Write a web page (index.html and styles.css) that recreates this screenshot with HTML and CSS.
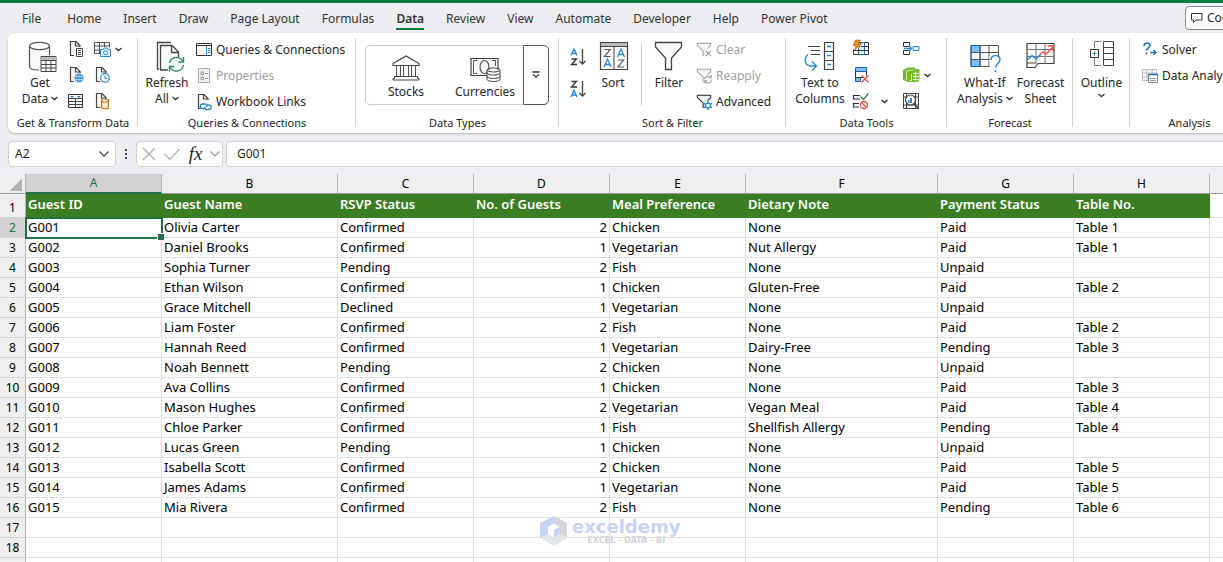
FILE: index.html
```html
<!DOCTYPE html>
<html lang="en">
<head>
  <meta charset="UTF-8" />
  <meta name="viewport" content="width=device-width, initial-scale=1" />
  <title>Guest List</title>
  <link rel="stylesheet" href="styles.css">
</head>
<body>

  <svg class="sprite" aria-hidden="true">
    <symbol id="chevron" viewBox="0 0 7 5"><path d="M.5 1l3 2.6 3-2.6" fill="none" stroke="#333" stroke-width="1.3"/></symbol>
    <symbol id="page" viewBox="0 0 16 18"><path d="M2.5 1.500h6.500l4 4v11h-10.500z" fill="#fafafa"/><path d="M6 15.500H2.500v-14h5.500l4 4v1.500M7.500 1.500v4.500h4.500" fill="none" stroke="#444" stroke-width="1.200"/></symbol>
    <symbol id="funnel" viewBox="0 0 18 18"><path d="M1.500 1.500h15v2.500l-5.500 6v6l-3-2v-4l-6.500-6z" fill="currentColor" fill-opacity=".08"/><path d="M8 16v-6l-6.500-6v-2.500h15v2.500l-3.500 3.500" fill="none" stroke="currentColor" stroke-width="1.200"/></symbol>
  </svg>

  <header class="top">
    <nav class="tabs">
      <a href="#" class="file">File</a>
      <a href="#">Home</a>
      <a href="#">Insert</a>
      <a href="#">Draw</a>
      <a href="#">Page Layout</a>
      <a href="#">Formulas</a>
      <a href="#" class="active">Data</a>
      <a href="#">Review</a>
      <a href="#">View</a>
      <a href="#">Automate</a>
      <a href="#">Developer</a>
      <a href="#">Help</a>
      <a href="#">Power Pivot</a>
    </nav>
    <button class="comments">
      <svg width="12" height="12" viewBox="0 0 12 12"><path d="M.500 1.500h10.500v6.500h-6l-2.500 2.500v-2.500h-2z" fill="none" stroke="#333"/></svg>
      Comments
    </button>
  </header>

  <main>
  <div class="ribbon">

    <section class="group get-data">
      <div class="tools">
        <button class="big">
          <svg width="32" height="32" viewBox="0 0 32 32"><path d="M5.500 5v21c0 2 4 3.500 10 3.500V18h10V5z" fill="#f8fafa"/><g fill="none" stroke="#555" stroke-width="1.200"><ellipse cx="15.500" cy="5" rx="10" ry="3.700" fill="#fff"/><path d="M5.500 5v20.500c0 2 4 3.500 9.500 3.500M25.500 5v9"/></g><path d="M17 15.500h15v15h-15z" fill="#fff" stroke="#444"/><path d="M17 16h15v3h-15z" fill="#bbb"/><path d="M17 19.500h15M17 23.500h15M17 27h15M22 19v11.500M27 19v11.500" stroke="#444" fill="none"/></svg>
          <span>Get</span>
          <span>Data <svg class="chev"><use href="#chevron"/></svg></span>
        </button>
        <div class="icon-grid">
          <button aria-label="From Text/CSV"><svg width="16" height="18" viewBox="0 0 16 18"><use href="#page"/><path d="M8.500 8.500h6v8h-6z" fill="#fff" stroke="#444"/><path d="M10 10.500h3M10 12.500h3M10 14.500h3" stroke="#444"/></svg></button>
          <button aria-label="From Picture"><svg width="17" height="18" viewBox="0 0 17 18"><path d="M.500 2.500h15v11h-15z" fill="#fafafa"/><path d="M6 13.500H.500v-11h15v5M.500 6h15M.500 10h6M5.500 2v11M10.500 2v5" fill="none" stroke="#555"/><path d="M6.500 9.500h2.500l1-1.500h3l1 1.500h2.500v7h-10z" fill="#e5f2fb" stroke="#2b88d0"/><circle cx="11.500" cy="12.700" r="2" fill="#fff" stroke="#2b88d0"/></svg></button>
          <svg class="chev"><use href="#chevron"/></svg>
          <button aria-label="From Web"><svg width="16" height="18" viewBox="0 0 16 18"><use href="#page"/><circle cx="11" cy="12" r="4.500" fill="#2583cc"/><path d="M6.500 10.500h9M6.500 13.500h9M11 7.500v9M9 8c-1 3-1 5 0 8M13 8c1 3 1 5 0 8" stroke="#b9dbf2" stroke-width=".8" fill="none"/></svg></button>
          <button aria-label="Recent Sources"><svg width="16" height="18" viewBox="0 0 16 18"><use href="#page"/><circle cx="11" cy="12" r="4.300" fill="#fff" stroke="#2b88d0" stroke-width="1.200"/><path d="M11 9.500v3h2.200" fill="none" stroke="#2b88d0"/></svg></button>
          <i></i>
          <button aria-label="From Table"><svg width="16" height="18" viewBox="0 0 16 18"><path d="M.500 2.500h14v13h-14z" fill="#fafafa" stroke="#333"/><path d="M.500 6.500h14M.500 9.500h14M.500 12.500h14M7.500 6.500v9" stroke="#444"/><path d="M2 4h4l-2 2zM9 4h4l-2 2z" fill="#2b88d0"/></svg></button>
          <button aria-label="Existing Connections"><svg width="16" height="18" viewBox="0 0 16 18"><use href="#page"/><path d="M7.500 8.500v7c0 .8 1.500 1.300 3.500 1.300s3.500-.5 3.500-1.300v-7" fill="#fbe9d3" stroke="#cf6f10" stroke-width="1.200"/><ellipse cx="11" cy="8.500" rx="3.500" ry="1.500" fill="#fff" stroke="#cf6f10" stroke-width="1.200"/></svg></button>
        </div>
      </div>
      <h2>Get &amp; Transform Data</h2>
    </section>

    <section class="group queries">
      <div class="tools">
        <button class="big">
          <svg width="32" height="32" viewBox="0 0 32 32"><path d="M9.500 4.500h11l7 7v18h-18z" fill="#f8fafa"/><path d="M8 28H6.500V1.500H20" fill="none" stroke="#444" stroke-width="1.300"/><path d="M17 29H9.500V4.500h11.500l6.500 6.500v5M20.500 4.500V11.500h7" fill="none" stroke="#444" stroke-width="1.300"/><path d="M18.500 22a7 7 0 0 1 13-2M32.500 16v5h-5M32.500 24a7 7 0 0 1-13 2.500M18.500 30.500v-5h5" fill="none" stroke="#2e8b57" stroke-width="1.400"/></svg>
          <span>Refresh</span>
          <span>All <svg class="chev"><use href="#chevron"/></svg></span>
        </button>
        <div class="list">
          <button><svg width="16" height="18" viewBox="0 0 16 18"><path d="M.500 2.500h15v12h-15z" fill="#fafafa" stroke="#333"/><path d="M.500 4.500h15" stroke="#333"/><path d="M10.500 5v9" stroke="#2b88d0"/><path d="M12 7.500h2.500M12 9.500h2.500M12 11.500h2.500" stroke="#2b88d0"/></svg>Queries &amp; Connections</button>
          <button disabled><svg width="16" height="18" viewBox="0 0 16 18"><path d="M2.500 1.500h11v14h-11z" fill="#f0f0f0" stroke="#aaa"/><path d="M5 5h2.500v2.500H5zM5 10h2.500v2.500H5zM9 6.500h3M9 11.500h3" fill="none" stroke="#999"/></svg>Properties</button>
          <button><svg width="16" height="18" viewBox="0 0 16 18"><use href="#page"/><path d="M4.500 11h10.500v6h-10.500z" fill="#fff"/><path d="M9 15.500H6.500a2 2 0 0 1 0-4.500h2.500a2 2 0 0 1 1.500 3M11 12h2a2 2 0 0 1 0 4.500h-2.500a2 2 0 0 1-1.500-3" fill="none" stroke="#2b88d0" stroke-width="1.300"/></svg>Workbook Links</button>
        </div>
      </div>
      <h2>Queries &amp; Connections</h2>
    </section>

    <section class="group types">
      <div class="tools">
        <div class="gallery">
          <button>
            <svg width="30" height="28" viewBox="0 0 30 28"><path d="M2 9.500L15 2l13 7.500v2H2z" fill="#fafafa" stroke="#444" stroke-width="1.200"/><path d="M5.500 11.500v11M9.500 11.500v11M12.500 11.500v11M17.500 11.500v11M20.500 11.500v11M24.500 11.500v11" stroke="#555"/><path d="M3.500 22.500h23v2h1.500v1.500H2v-1.500h1.500z" fill="#fff" stroke="#444"/></svg>
            Stocks
          </button>
          <button>
            <svg width="30" height="28" viewBox="0 0 30 28"><path d="M1 4.500h27v17H1z" fill="#f8fafa" stroke="#444" stroke-width="1.200"/><path d="M7 6.500H3.500V19.500H7M22 6.500h3.500V12" fill="none" stroke="#555"/><ellipse cx="14.500" cy="13" rx="4.500" ry="6.500" fill="none" stroke="#555" stroke-width="1.200"/><path d="M17 16v10c0 1 3 2 6.500 2s6.500-1 6.500-2V16z" fill="#fff"/><g fill="none" stroke="#444"><ellipse cx="23.500" cy="16" rx="6.500" ry="2"/><path d="M17 16v9.500c0 1 3 2 6.500 2s6.500-1 6.500-2V16M17 19c0 1 3 2 6.500 2s6.500-1 6.500-2M17 22.500c0 1 3 2 6.500 2s6.500-1 6.500-2"/></g></svg>
            Currencies
          </button>
          <button class="more" aria-label="More data types"><svg width="8" height="8" viewBox="0 0 8 8"><path d="M.500 1h7M1 3.500L4 6l3-2.500" fill="none" stroke="#333" stroke-width="1.300"/></svg></button>
        </div>
      </div>
      <h2>Data Types</h2>
    </section>

    <section class="group sort">
      <div class="tools">
        <div class="sort-dir">
          <button aria-label="Sort A to Z"><svg width="18" height="20" viewBox="0 0 18 20"><path d="M2 8.500L5 2l3 6.500M3 6.500h4" fill="none" stroke="#2b88d0" stroke-width="1.400"/><path d="M2.500 12h5l-5 5.500h5.500" fill="none" stroke="#333" stroke-width="1.300"/><path d="M13.500 2v15M10.500 14l3 3 3-3" fill="none" stroke="#444" stroke-width="1.300"/></svg></button>
          <button aria-label="Sort Z to A"><svg width="18" height="20" viewBox="0 0 18 20"><path d="M2.500 2.500h5l-5 5.500h5.500" fill="none" stroke="#333" stroke-width="1.300"/><path d="M2 18l3-6.500 3 6.500M3 16h4" fill="none" stroke="#2b88d0" stroke-width="1.400"/><path d="M13.500 2v15M10.500 14l3 3 3-3" fill="none" stroke="#444" stroke-width="1.300"/></svg></button>
        </div>
        <button class="big">
          <svg width="32" height="32" viewBox="0 0 32 32"><path d="M3.500 1.500h27v27h-27z" fill="#fafafa" stroke="#444" stroke-width="1.200"/><path d="M4 2h26v3H4z" fill="#bbb"/><path d="M3.500 5.500h27M17 5.500v23" stroke="#444"/><path d="M7.500 8.500h5.500l-5.500 7h6M21 19h5.500l-5.500 7h6" fill="none" stroke="#555" stroke-width="1.200"/><path d="M7 26l3.500-8 3.500 8M8.500 23.500h4M20.500 16l3.500-8 3.500 8M22 13.500h4" fill="none" stroke="#2b88d0" stroke-width="1.300"/></svg>
          <span>Sort</span>
        </button>
        <button class="big filter">
          <svg width="32" height="32" viewBox="0 0 32 32"><path d="M2.500 1.500h26v4.500l-10 11v11.500h-6V17l-10-11z" fill="#fafafa" stroke="#444" stroke-width="1.300"/></svg>
          <span>Filter</span>
        </button>
        <div class="list">
          <button disabled><svg width="16" height="18" viewBox="0 0 18 18"><use href="#funnel"/><path d="M11 10l6 6M17 10l-6 6" stroke="#999" stroke-width="1.200"/></svg>Clear</button>
          <button disabled><svg width="16" height="18" viewBox="0 0 18 18"><use href="#funnel"/><path d="M9.500 12.500a4 4 0 0 1 7-2M17 8v3h-3M17.500 13a4 4 0 0 1-7 2.500M10 17.500v-3h3" fill="none" stroke="#999" stroke-width="1.200"/></svg>Reapply</button>
          <button><svg width="16" height="18" viewBox="0 0 18 18"><use href="#funnel"/><circle cx="13.500" cy="13" r="2.800" fill="#fff" stroke="#2b88d0" stroke-width="1.500"/><path d="M13.500 8v2.500M13.500 15.500V18M9 10.500l2.200 1.200M15.800 14.300L18 15.500M9 15.500l2.200-1.200M15.800 11.700L18 10.500" stroke="#2b88d0" stroke-width="1.600"/></svg>Advanced</button>
        </div>
      </div>
      <h2>Sort &amp; Filter</h2>
    </section>

    <section class="group data-tools">
      <div class="tools">
        <button class="big">
          <svg width="32" height="32" viewBox="0 0 32 32"><path d="M4 5.500h12M7 9.500h9M7 13.500h9" stroke="#444" stroke-width="1.200"/><path d="M4 13.500c-5 5-3 11 3 11.500h5M8 20.500l4.500 4.500-4.500 4.500" fill="none" stroke="#2b88d0" stroke-width="1.400"/><path d="M20.500 1.500h9v27h-9zM20.500 10.500h9M20.500 19.500h9" fill="#fafafa" stroke="#444" stroke-width="1.200"/><path d="M23 5.500h4M23 14.500h4M23 23.500h4" stroke="#2b88d0" stroke-width="1.300"/></svg>
          <span>Text to</span>
          <span>Columns</span>
        </button>
        <div class="icon-grid">
          <button aria-label="Flash Fill"><svg width="16" height="18" viewBox="0 0 16 18"><path d="M6 2.500h9.500v12H.500v-5" fill="#fafafa" stroke="#333"/><path d="M8.500 2.500h3v12h-6v-6z" fill="#dcedfa" stroke="#2072b8"/><path d="M.500 10.500h15M8 6.500h7.500" stroke="#333"/><path d="M2.500 0h5l-2 3.500h3L1.500 10l1.500-4.500H0z" fill="#e08a1e" stroke="#b86208" stroke-width=".6"/></svg></button>
          <i></i>
          <button aria-label="Consolidate"><svg width="17" height="18" viewBox="0 0 17 18"><path d="M.500 2.500h6v4M.500 2.500v4h6M.500 10.500v4h6v-4z" fill="none" stroke="#333"/><path d="M1 8.500h7M6 6l2.500 2.500L6 11" fill="none" stroke="#2b88d0" stroke-width="1.300"/><path d="M10 6.500h6v4h-6z" fill="#e5f2fb" stroke="#2b88d0"/></svg></button>
          <i></i>
          <button aria-label="Remove Duplicates"><svg width="16" height="18" viewBox="0 0 16 18"><path d="M2.500 1.500h11v4h-11zM2.500 11.500h5v4h-5z" fill="#83beec" stroke="#1664a8"/><path d="M2.500 5.500v6h8M13.500 5.500v4" fill="none" stroke="#333"/><path d="M8.500 9.500l7 7M15.500 9.500l-7 7" stroke="#e04a3f" stroke-width="1.300"/></svg></button>
          <i></i>
          <button aria-label="Relationships"><svg width="17" height="18" viewBox="0 0 17 18"><path d="M0 4l5-2.500h7V3h3.500l1 1v10l-2 2H5l-5-2z" fill="#76b72a"/><path d="M3.500 5v9.500M3.500 5l7-1" fill="none" stroke="#cfe8ae"/><path d="M8.500 8v6.500M6.500 14.500h2M10 7.500h6M10 10.500h6M10 13.500h6M12.500 5.500v9" fill="none" stroke="#e6f5d3"/></svg></button>
          <svg class="chev"><use href="#chevron"/></svg>
          <button aria-label="Data Validation"><svg width="16" height="18" viewBox="0 0 16 18"><path d="M7 3.500H.500v3.500H7M6 11.500H.500V15H6" fill="none" stroke="#333" stroke-width="1.200"/><path d="M7.500 4.500l3 3 5-6" fill="none" stroke="#2e8b57" stroke-width="1.300"/><circle cx="11" cy="13" r="3.500" fill="#fff" stroke="#e04a3f" stroke-width="1.300"/><path d="M8.500 10.500l5 5" stroke="#e04a3f" stroke-width="1.300"/></svg></button>
          <svg class="chev"><use href="#chevron"/></svg>
          <button aria-label="Manage Data Model"><svg width="17" height="18" viewBox="0 0 17 18"><path d="M.500 1.500h15v15h-15zM.500 5h15M.500 13h15M3.500 1.500v15M12.500 1.500v15" fill="none" stroke="#444"/><circle cx="7.500" cy="8" r="5" fill="#fff" stroke="#444" stroke-width="1.200"/><path d="M5 8h1.500v3H5zM7 6h2v5H7z" fill="#2b88d0"/><path d="M11 12l5 5" stroke="#444" stroke-width="1.500"/></svg></button>
        </div>
      </div>
      <h2>Data Tools</h2>
    </section>

    <section class="group forecast">
      <div class="tools">
        <button class="big">
          <svg width="32" height="32" viewBox="0 0 32 32"><path d="M2 4.500h27v21H2z" fill="#fafafa"/><path d="M2 4.500h9v7H2zM2 18.500h9v7H2z" fill="#83beec"/><path d="M21 25.500H2v-21h27.500V15M2 11.500h27M2 18.500h19M11 4.500v21M20 4.500v21" fill="none" stroke="#555"/><path d="M2 4.500h9v21H2z" fill="none" stroke="#1664a8"/><path d="M20.500 15h11v16h-11z" fill="#fff"/><path d="M22 19c0-6 9-6 9-.5 0 4-4.500 4-4.500 8M26.500 29v2" fill="none" stroke="#2b88d0" stroke-width="1.500"/></svg>
          <span>What-If</span>
          <span>Analysis <svg class="chev"><use href="#chevron"/></svg></span>
        </button>
        <button class="big">
          <svg width="32" height="32" viewBox="0 0 32 32"><path d="M2 2.500h27v20H13l-3 4H2z" fill="#fafafa" stroke="#444" stroke-width="1.200"/><path d="M2 8.500h27M2 15.500h27M11 2.500v20M20 2.500v20" stroke="#777"/><path d="M2 22h9" stroke="#444"/><path d="M3 18.500l4-4 4 3.500 5-5" fill="none" stroke="#2b88d0" stroke-width="1.600"/><path d="M15 13l3-2 3 2 7-7M22.500 5h5.500v5.500" fill="none" stroke="#e8513f" stroke-width="1.400"/></svg>
          <span>Forecast</span>
          <span>Sheet</span>
        </button>
      </div>
      <h2>Forecast</h2>
    </section>

    <section class="group outline">
      <div class="tools">
        <button class="big">
          <svg width="26" height="30" viewBox="0 0 26 30"><path d="M5.500 7V.500H12M5.500 17v7.500H12" fill="none" stroke="#777"/><path d="M14.500.500h10v24h-10zM14.500 6.500h10M14.500 12.500h10M14.500 18.500h10" fill="#fafafa" stroke="#444"/><path d="M1.500 8.500h8v8h-8z" fill="#fff" stroke="#333"/><path d="M3.500 12.500h4M5.500 10.500v4" stroke="#2b88d0"/></svg>
          <span>Outline</span>
          <svg class="chev"><use href="#chevron"/></svg>
        </button>
      </div>
    </section>

    <section class="group analysis">
      <div class="tools">
        <div class="list">
          <button><svg width="16" height="18" viewBox="0 0 16 18"><path d="M2 5c0-4 6-4 6-.5 0 2.500-3.500 2.500-3.500 5M4.500 11.500v2" fill="none" stroke="#2072b8" stroke-width="1.600"/><path d="M8 11.500h6M11.500 9l2.500 2.500-2.500 2.500" fill="none" stroke="#2072b8" stroke-width="1.300"/></svg>Solver</button>
          <button><svg width="16" height="18" viewBox="0 0 16 18"><path d="M.500 2.500h14v11H.500zM.500 6h14M.500 10h14M5 2.500v11M10 2.500v11" fill="#fafafa" stroke="#bbb"/><path d="M6.500 7.500h9v8h-9z" fill="#fff" stroke="#888"/><path d="M6 7.500h10" stroke="#2072b8" stroke-width="1.600"/><path d="M8 11.500h6M8 13.500h6" stroke="#999"/></svg>Data Analysis</button>
        </div>
      </div>
      <h2>Analysis</h2>
    </section>
  </div>

  <div class="formula-bar">
    <div class="box name-box">
      <input type="text" aria-label="Name Box" value="A2">
      <button aria-label="Open names"><svg width="10" height="6" viewBox="0 0 10 6"><path d="M.500.500L5 5 9.500.500" fill="none" stroke="#444" stroke-width="1.300"/></svg></button>
    </div>
    <svg class="dots" width="4" height="12" viewBox="0 0 4 12" fill="#444"><path d="M1 1h2v2H1zM1 5h2v2H1zM1 9h2v2H1z"/></svg>
    <div class="box fx-box">
      <button aria-label="Cancel"><svg width="14" height="14" viewBox="0 0 14 14"><path d="M1 1l12 12M13 1L1 13" stroke="#aaa" stroke-width="1.200"/></svg></button>
      <button aria-label="Enter"><svg width="18" height="14" viewBox="0 0 18 14"><path d="M1.500 7L7 12.500 16.500 2" fill="none" stroke="#aaa" stroke-width="1.200"/></svg></button>
      <button class="fx">fx</button>
      <button aria-label="More functions"><svg width="10" height="6" viewBox="0 0 10 6"><path d="M.500.500L5 5 9.500.500" fill="none" stroke="#999" stroke-width="1.200"/></svg></button>
    </div>
    <input class="box formula" type="text" aria-label="Formula Bar" value="G001">
  </div>

  <div class="sheet">
    <table>
      <colgroup>
        <col class="c-num"><col class="c-std"><col class="c-name"><col class="c-std"><col class="c-std"><col class="c-std"><col class="c-note"><col class="c-std"><col class="c-std"><col>
      </colgroup>
      <thead>
        <tr><th class="corner"></th><th class="on">A</th><th>B</th><th>C</th><th>D</th><th>E</th><th>F</th><th>G</th><th>H</th><th></th></tr>
      </thead>
      <tbody>
        <tr class="titles"><th>1</th><td>Guest ID</td><td>Guest Name</td><td>RSVP Status</td><td>No. of Guests</td><td>Meal Preference</td><td>Dietary Note</td><td>Payment Status</td><td>Table No.</td><td></td></tr>
        <tr><th class="on">2</th><td class="selected">G001</td><td>Olivia Carter</td><td>Confirmed</td><td class="num">2</td><td>Chicken</td><td>None</td><td>Paid</td><td>Table 1</td><td></td></tr>
        <tr><th>3</th><td>G002</td><td>Daniel Brooks</td><td>Confirmed</td><td class="num">1</td><td>Vegetarian</td><td>Nut Allergy</td><td>Paid</td><td>Table 1</td><td></td></tr>
        <tr><th>4</th><td>G003</td><td>Sophia Turner</td><td>Pending</td><td class="num">2</td><td>Fish</td><td>None</td><td>Unpaid</td><td></td><td></td></tr>
        <tr><th>5</th><td>G004</td><td>Ethan Wilson</td><td>Confirmed</td><td class="num">1</td><td>Chicken</td><td>Gluten-Free</td><td>Paid</td><td>Table 2</td><td></td></tr>
        <tr><th>6</th><td>G005</td><td>Grace Mitchell</td><td>Declined</td><td class="num">1</td><td>Vegetarian</td><td>None</td><td>Unpaid</td><td></td><td></td></tr>
        <tr><th>7</th><td>G006</td><td>Liam Foster</td><td>Confirmed</td><td class="num">2</td><td>Fish</td><td>None</td><td>Paid</td><td>Table 2</td><td></td></tr>
        <tr><th>8</th><td>G007</td><td>Hannah Reed</td><td>Confirmed</td><td class="num">1</td><td>Vegetarian</td><td>Dairy-Free</td><td>Pending</td><td>Table 3</td><td></td></tr>
        <tr><th>9</th><td>G008</td><td>Noah Bennett</td><td>Pending</td><td class="num">2</td><td>Chicken</td><td>None</td><td>Unpaid</td><td></td><td></td></tr>
        <tr><th>10</th><td>G009</td><td>Ava Collins</td><td>Confirmed</td><td class="num">1</td><td>Chicken</td><td>None</td><td>Paid</td><td>Table 3</td><td></td></tr>
        <tr><th>11</th><td>G010</td><td>Mason Hughes</td><td>Confirmed</td><td class="num">2</td><td>Vegetarian</td><td>Vegan Meal</td><td>Paid</td><td>Table 4</td><td></td></tr>
        <tr><th>12</th><td>G011</td><td>Chloe Parker</td><td>Confirmed</td><td class="num">1</td><td>Fish</td><td>Shellfish Allergy</td><td>Pending</td><td>Table 4</td><td></td></tr>
        <tr><th>13</th><td>G012</td><td>Lucas Green</td><td>Pending</td><td class="num">1</td><td>Chicken</td><td>None</td><td>Unpaid</td><td></td><td></td></tr>
        <tr><th>14</th><td>G013</td><td>Isabella Scott</td><td>Confirmed</td><td class="num">2</td><td>Chicken</td><td>None</td><td>Paid</td><td>Table 5</td><td></td></tr>
        <tr><th>15</th><td>G014</td><td>James Adams</td><td>Confirmed</td><td class="num">1</td><td>Vegetarian</td><td>None</td><td>Paid</td><td>Table 5</td><td></td></tr>
        <tr><th>16</th><td>G015</td><td>Mia Rivera</td><td>Confirmed</td><td class="num">2</td><td>Fish</td><td>None</td><td>Pending</td><td>Table 6</td><td></td></tr>
        <tr><th>17</th><td></td><td></td><td></td><td></td><td></td><td></td><td></td><td></td><td></td></tr>
        <tr><th>18</th><td></td><td></td><td></td><td></td><td></td><td></td><td></td><td></td><td></td></tr>
        <tr><th></th><td></td><td></td><td></td><td></td><td></td><td></td><td></td><td></td><td></td></tr>
      </tbody>
    </table>

    <div class="watermark">
      <svg width="28" height="32" viewBox="0 0 28 32"><path d="M14 1l13 7-7 4-6-3.500L8 12v7l-8 4V8z" fill="#c6d3f3"/><path d="M14 1l13 7v15l-7-4v-7l-6-3.500z" fill="#d3d5da"/><path d="M0 23l8-4 6 4 6-4 7 4-13 8z" fill="#e3e6ec"/><path d="M14 15l6-3v7l-6 4z" fill="#c6d3f3"/></svg>
      <div>
        <strong>exceldemy</strong>
        <small>EXCEL - DATA - BI</small>
      </div>
    </div>
  </div>
  </main>

</body>
</html>
```

FILE: styles.css
```css
* {
  box-sizing: border-box;
  margin: 0;
  padding: 0;
}

body {
  height: 100vh;
  overflow: hidden;
  background-color: #edeef2;
  color: #262626;
  font-family: "Noto Sans", "Open Sans", sans-serif;
  font-size: 12px;
  line-height: 16px;
}

button,
input {
  border: none;
  background: none;
  color: inherit;
  font: inherit;
}

svg {
  flex: none;
  overflow: visible;
}

.sprite {
  position: absolute;
  width: 0;
  height: 0;
}

/* tabs */
.top {
  display: flex;
  justify-content: space-between;
  height: 33px;
  border-top: 3px solid #107c41;
  overflow: hidden;
}

.tabs {
  display: flex;
  gap: 22px;
  padding-left: 22px;
}

.tabs a {
  padding-top: 8px;
  color: #333;
  text-decoration: none;
  white-space: nowrap;
}

.tabs .file {
  margin-right: 4px;
}

.tabs .active {
  height: 27px;
  border-bottom: 2px solid #107c41;
  font-weight: 600;
}

.comments {
  display: flex;
  flex: none;
  align-items: center;
  gap: 4px;
  width: 100px;
  height: 24px;
  margin: 3px -62px 0 0;
  padding-left: 5px;
  border: 1px solid #8a8a8a;
  border-radius: 4px;
  background-color: #fff;
}

/* ribbon */
.ribbon {
  display: grid;
  grid-template-columns: 130px 218px 203px 227px 161px 126px 57px minmax(119px, 1fr);
  height: 100px;
  margin-left: 8px;
  padding: 3px 0 2px;
  border-radius: 7px 0 0 7px;
  background-color: #fff;
  box-shadow: 0 1px 2px #b5b6ba;
}

.group {
  position: relative;
  display: flex;
  flex-direction: column;
  min-width: 0;
}

/* divider between groups, shorter than the ribbon */
.group:not(:last-child)::after {
  content: "";
  position: absolute;
  top: 2px;
  right: 0;
  bottom: 4px;
  width: 1px;
  background-color: #d0d0d0;
}

.group h2 {
  font-size: 11px;
  font-weight: normal;
  line-height: 17px;
  text-align: center;
  white-space: nowrap;
}

.tools {
  display: flex;
  height: 78px;
}

.big {
  display: flex;
  flex-direction: column;
  align-items: center;
  padding-top: 5px;
  white-space: nowrap;
}

.big > svg:first-child {
  margin-bottom: 2px;
}

.chev {
  width: 7px;
  height: 5px;
  vertical-align: 2px;
}

.icon-grid {
  display: grid;
  grid-template-rows: repeat(3, 26px);
  align-items: center;
  justify-items: start;
}

.icon-grid button,
.list svg,
.sort-dir button {
  display: block;
  line-height: 0;
}

.list {
  padding-top: 1px;
}

.list button {
  display: flex;
  align-items: center;
  gap: 4px;
  height: 26px;
  white-space: nowrap;
}

.list button:disabled {
  color: #a0a0a0;
}

.get-data .tools {
  padding-left: 10px;
}

.get-data .big {
  width: 44px;
}

.get-data .icon-grid {
  grid-template-columns: 26px 21px 7px;
  margin-left: 6px;
}

.queries .tools {
  padding-left: 8px;
}

.queries .big {
  width: 42px;
}

.queries .list {
  margin-left: 8px;
}

.gallery {
  display: grid;
  grid-template-columns: 80px 78px 24px;
  flex: 1;
  height: 60px;
  margin: 9px 10px 0 9px;
  border: 1px solid #c8c8c8;
  border-radius: 5px;
}

.gallery button {
  display: flex;
  flex-direction: column;
  align-items: center;
  gap: 2px;
  padding-top: 8px;
}

.gallery .more {
  justify-content: center;
  margin: -1px;
  padding: 0;
  border: 1px solid #555;
  border-radius: 0 5px 5px 0;
}

.sort .tools {
  padding-left: 10px;
}

.sort-dir {
  display: flex;
  flex-direction: column;
  gap: 12px;
  padding-top: 11px;
}

.sort .big {
  width: 32px;
  margin-left: 10px;
}

.sort .filter {
  position: relative;
  margin-left: 24px;
}

.filter::before {
  content: "";
  position: absolute;
  top: 8px;
  left: -12px;
  width: 1px;
  height: 62px;
  background-color: #c8c8c8;
}

.sort .list {
  margin-left: 11px;
}

.data-tools .tools {
  padding-left: 9px;
}

.data-tools .big {
  width: 50px;
}

.data-tools .icon-grid {
  grid-template-columns: 28px 22px 21px 7px;
  margin-left: 8px;
}

.forecast .tools {
  gap: 4px;
  padding-left: 10px;
}

.outline .tools {
  justify-content: center;
}

.outline .big {
  gap: 2px;
}

.analysis .tools {
  padding-left: 12px;
}

/* formula bar */
.formula-bar {
  display: flex;
  align-items: center;
  height: 41px;
  padding-left: 8px;
}

.box {
  height: 26px;
  border: 1px solid #d2d2d4;
  border-radius: 4px;
  background-color: #fff;
}

.name-box,
.fx-box {
  display: flex;
  align-items: center;
}

.name-box {
  width: 108px;
}

.name-box input {
  flex: 1;
  min-width: 0;
  padding-left: 6px;
}

.name-box button {
  width: 22px;
  line-height: 0;
}

.dots {
  margin: 0 8px;
}

.fx-box {
  justify-content: space-between;
  width: 87px;
  padding: 0 2px 0 5px;
}

.fx-box button {
  line-height: 0;
}

.fx-box .fx {
  font: italic 19px/20px "Liberation Serif", serif;
}

.formula {
  flex: 1;
  min-width: 0;
  margin-left: 3px;
  padding-left: 10px;
  border-right: none;
  border-radius: 4px 0 0 4px;
}

/* worksheet */
.sheet {
  position: relative;
}

table {
  width: 100%;
  table-layout: fixed;
  border-spacing: 0;
  background-color: #fff;
  color: #000;
  font-size: 13px;
  line-height: 19px;
}

.c-num {
  width: 26px;
}

.c-std {
  width: 136px;
}

.c-name {
  width: 176px;
}

.c-note {
  width: 192px;
}

th {
  height: 20px;
  border-right: 1px solid #b4b4b4;
  border-bottom: 1px solid #d4d4d4;
  background-color: #efefef;
  font-size: 12px;
  font-weight: normal;
  line-height: 18px;
}

thead th {
  border-bottom-color: #999;
}

th.on {
  background-color: #d2d2d2;
  color: #217346;
}

thead th.on {
  border-bottom: 2px solid #217346;
}

.corner {
  background: linear-gradient(135deg, transparent 50%, #b4b4b4 50%) 10px 5px / 12px 12px no-repeat #efefef;
}

td {
  height: 20px;
  padding: 0 2px;
  border-right: 1px solid #e0e0e0;
  border-bottom: 1px solid #e0e0e0;
  white-space: nowrap;
}

th:last-child,
td:last-child {
  border-right: none;
}

.num {
  text-align: right;
}

.titles td,
.titles th {
  height: 24px;
}

.titles th {
  vertical-align: bottom;
}

.titles td:not(:last-child) {
  padding-bottom: 2px;
  border-color: #3b7d23;
  background-color: #3b7d23;
  color: #fff;
  font-weight: 600;
}

.selected {
  position: relative;
}

.selected::before {
  content: "";
  position: absolute;
  inset: -1px -2px -2px -1px;
  border: 2px solid #217346;
}

.selected::after {
  content: "";
  position: absolute;
  right: -3px;
  bottom: -3px;
  width: 6px;
  height: 6px;
  border: solid #fff;
  border-width: 1px 0 0 1px;
  background-color: #217346;
}

.watermark {
  position: absolute;
  top: 341px;
  left: 540px;
  display: flex;
  align-items: center;
  gap: 4px;
  color: #c6d3f3;
  font-family: "DejaVu Sans", sans-serif;
}

.watermark strong,
.watermark small {
  display: block;
}

.watermark strong {
  font-size: 18px;
  line-height: 20px;
}

.watermark small {
  color: #d0d3d9;
  font-size: 8px;
  font-weight: bold;
  line-height: 8px;
  text-align: center;
}
```
